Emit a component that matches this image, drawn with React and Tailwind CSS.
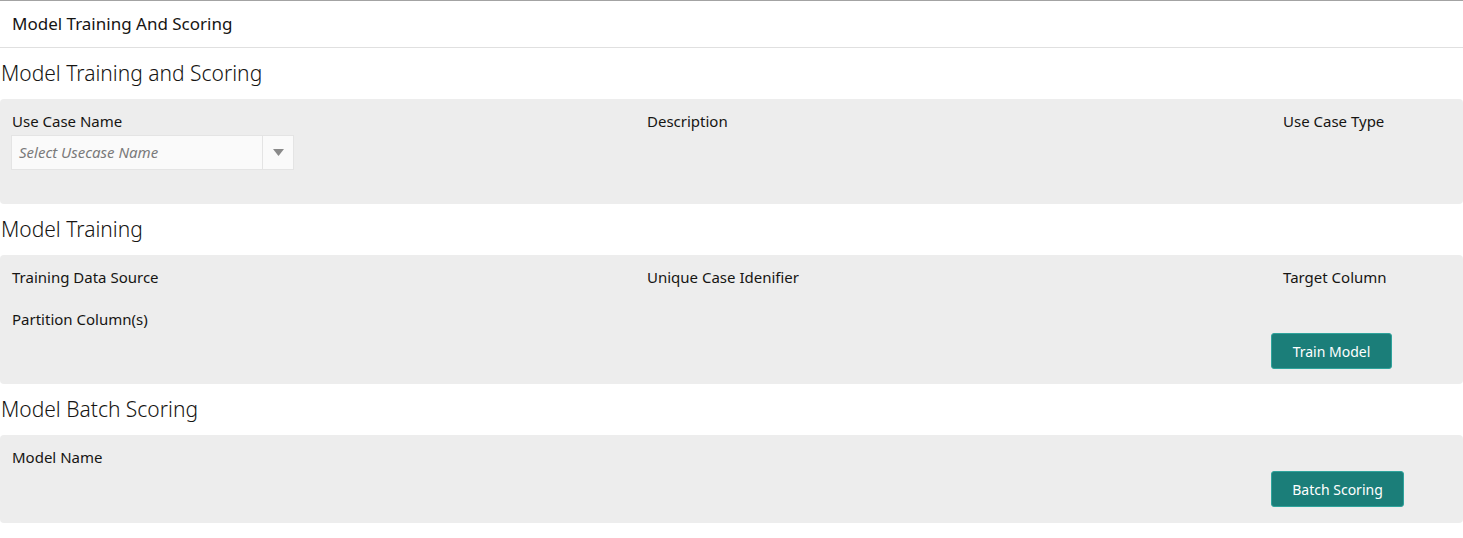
import React from 'react';

const font = { fontFamily: '"Noto Sans", "Open Sans", sans-serif' };

const Label = ({ children }) => (
  <div className="text-[15px] leading-[20px] text-[#161513] pl-3">{children}</div>
);

const ActionButton = ({ children, width }) => (
  <button
    className={`h-[36px] ${width} rounded-[3px] border border-[#2fa39c] bg-[#1b7e79] text-[14px] text-white`}
  >
    {children}
  </button>
);

const SectionTitle = ({ children }) => (
  <h2 className="pl-px text-[21px] font-light leading-[30px] text-[#161513] pt-[10px] pb-[11px]">{children}</h2>
);

export default function App() {
  return (
    <div className="w-[1463px] min-h-[538px] bg-white" style={font}>
      <div className="h-[48px] border-t border-b border-t-[#a3a3a3] border-b-[#e0e0e0] flex items-center pl-3">
        <span className="text-[17px] text-[#161513]">Model Training And Scoring</span>
      </div>

      <SectionTitle>Model Training and Scoring</SectionTitle>
      <div className="rounded-[4px] bg-[#ededed] pt-3 pb-[34px] grid grid-cols-[635px_636px_1fr]">
        <div>
          <Label>Use Case Name</Label>
          <div className="ml-[11px] mt-1 flex h-[35px] w-[283px] border border-[#e4e4e4] bg-[#fafafa]">
            <span className="flex-1 flex items-center pl-[7px] text-[15px] italic text-[#7a7a7a]">
              Select Usecase Name
            </span>
            <span className="flex w-[31px] items-center justify-center border-l border-[#e4e4e4]">
              <svg width="11" height="7" viewBox="0 0 11 7">
                <path d="M0 0h11L5.5 7z" fill="#8a8a8a" />
              </svg>
            </span>
          </div>
        </div>
        <Label>Description</Label>
        <Label>Use Case Type</Label>
      </div>

      <SectionTitle>Model Training</SectionTitle>
      <div className="rounded-[4px] bg-[#ededed] pt-3 pb-[15px] grid grid-cols-[635px_636px_1fr]">
        <Label>Training Data Source</Label>
        <Label>Unique Case Idenifier</Label>
        <Label>Target Column</Label>
        <div className="pt-[22px]">
          <Label>Partition Column(s)</Label>
        </div>
        <div />
        <div className="pt-[46px]">
          <ActionButton width="w-[121px]">Train Model</ActionButton>
        </div>
      </div>

      <SectionTitle>Model Batch Scoring</SectionTitle>
      <div className="rounded-[4px] bg-[#ededed] pt-3 pb-4 grid grid-cols-[635px_636px_1fr]">
        <Label>Model Name</Label>
        <div />
        <div className="pt-6">
          <ActionButton width="w-[133px]">Batch Scoring</ActionButton>
        </div>
      </div>
    </div>
  );
}
